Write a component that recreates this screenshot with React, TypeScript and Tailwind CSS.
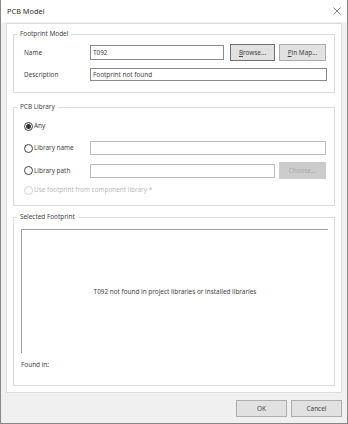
import React from "react";

const font = { fontFamily: '"Noto Sans", "Open Sans", sans-serif' };

function Group({ title, className, children }: { title: string; className?: string; children: React.ReactNode }) {
  return (
    <div className={`relative border border-[#dcdcdc] ${className ?? ""}`}>
      <span className="absolute -top-[6px] left-[3px] bg-white px-[3px] text-[6.4px] leading-[10px] text-[#444]">
        {title}
      </span>
      {children}
    </div>
  );
}

function Radio({ checked, disabled, label }: { checked?: boolean; disabled?: boolean; label: string }) {
  return (
    <div className="flex items-center gap-[1px]">
      <span
        className={`flex h-[9px] w-[9px] items-center justify-center rounded-full border ${
          disabled ? "border-[#d4d4d4]" : "border-[#444]"
        }`}
      >
        {checked && <span className="h-[5px] w-[5px] rounded-full bg-[#333]" />}
      </span>
      <span className={disabled ? "text-[#b8b8b8]" : "text-[#444]"}>{label}</span>
    </div>
  );
}

export default function App() {
  return (
    <div
      style={font}
      className="flex h-[424px] w-[348px] flex-col border-x border-b border-[#888] bg-[#f0f0f0] text-[6.4px] leading-[10px] text-[#444]"
    >
      {/* title bar */}
      <div className="flex h-[22px] items-center justify-between bg-white pl-[6px] pr-[5px]">
        <span className="text-[7.4px] text-[#333]">PCB Model</span>
        <svg width="8" height="8" viewBox="0 0 8 8" className="mr-[1px]">
          <path d="M0.5 0.5 L7.5 7.5 M7.5 0.5 L0.5 7.5" stroke="#555" strokeWidth="0.7" />
        </svg>
      </div>

      {/* main panel */}
      <div className="mx-[5px] mt-[1px] flex h-[370px] flex-col border border-[#dcdcdc] bg-white px-[6px] pt-[10px]">
        <Group title="Footprint Model" className="h-[59px]">
          <div className="flex flex-col gap-[7px] pl-[10px] pt-[9px]">
            <div className="flex items-center">
              <span className="w-[66px]">Name</span>
              <div className="flex h-[15px] w-[134px] items-center border border-[#8a8a8a] pl-[2px]">T092</div>
              <button className="ml-[6px] h-[17px] w-[45px] border border-[#707070] bg-[#e1e1e1] text-[6.4px]">
                <span className="underline">B</span>rowse...
              </button>
              <button className="ml-[4px] h-[17px] w-[47px] border border-[#adadad] bg-[#e1e1e1] text-[6.4px]">
                <span className="underline">P</span>in Map...
              </button>
            </div>
            <div className="flex items-center">
              <span className="w-[66px]">Description</span>
              <div className="flex h-[13px] w-[237px] items-center border border-[#8a8a8a] pl-[2px]">
                Footprint not found
              </div>
            </div>
          </div>
        </Group>

        <Group title="PCB Library" className="mt-[14px] h-[99px]">
          <div className="flex flex-col pl-[10px] pt-[13px]">
            <Radio checked label="Any" />
            <div className="mt-[10px] flex items-center">
              <div className="w-[66px]">
                <Radio label="Library name" />
              </div>
              <div className="h-[14px] w-[236px] border border-[#bcbcbc]" />
            </div>
            <div className="mt-[7px] flex items-center">
              <div className="w-[66px]">
                <Radio label="Library path" />
              </div>
              <div className="h-[14px] w-[185px] border border-[#bcbcbc]" />
              <button className="ml-[4px] h-[17px] w-[47px] bg-[#cccccc] text-[6.4px] text-[#a8a8a8]">Choose...</button>
            </div>
            <div className="mt-[6px]">
              <Radio disabled label="Use footprint from component library *" />
            </div>
          </div>
        </Group>

        <Group title="Selected Footprint" className="mt-[11px] h-[169px]">
          <div className="flex flex-col px-[7px] pt-[11px]">
            <div className="flex h-[124px] w-[307px] items-center justify-center border-l border-t border-[#a0a0a0]">
              T092 not found in project libraries or installed libraries
            </div>
            <div className="mt-[7px]">Found in:</div>
          </div>
        </Group>
      </div>

      {/* footer */}
      <div className="mt-[7px] flex justify-end gap-[4px] pr-[5px]">
        <button className="h-[17px] w-[51px] border border-[#adadad] bg-[#e1e1e1] text-[6.4px]">OK</button>
        <button className="h-[17px] w-[51px] border border-[#adadad] bg-[#e1e1e1] text-[6.4px]">Cancel</button>
      </div>
    </div>
  );
}
